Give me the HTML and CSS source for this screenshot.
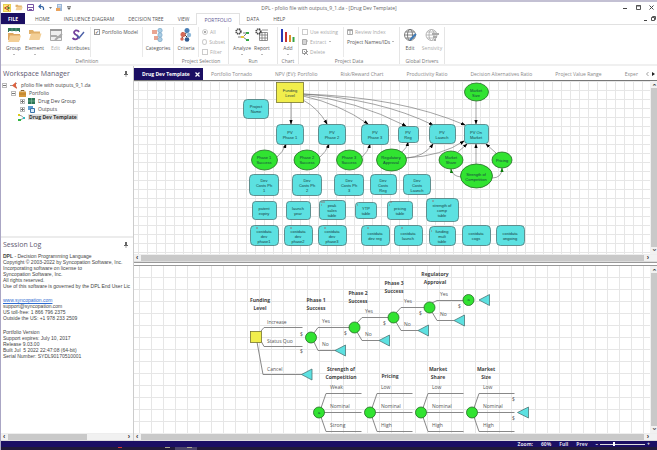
FILE: index.html
```html
<!DOCTYPE html>
<html lang="en">
<head>
<meta charset="utf-8">
<title>DPL - pfolio file with outputs_9_1.da</title>
<link rel="stylesheet" href="styles.css">
</head>
<body>
<svg class="defs" width="0" height="0" aria-hidden="true">
  <defs>
    <pattern id="grid-s" width="9" height="9" patternUnits="userSpaceOnUse"><path class="grid" d="M4.5 0V9M0 .5H9"/></pattern>
    <pattern id="grid-l" width="12" height="12" patternUnits="userSpaceOnUse"><path class="grid" d="M5.5 0V12M0 11.5H12"/></pattern>
    <marker id="arrow" viewBox="0 0 6 4" refX="5" refY="2" markerWidth="5" markerHeight="4" markerUnits="userSpaceOnUse" orient="auto"><path d="M0 0L6 2L0 4Z"/></marker>
    <marker id="arrow-g" viewBox="0 0 6 4" refX="5" refY="2" markerWidth="5" markerHeight="4" markerUnits="userSpaceOnUse" orient="auto"><path fill="#0a7a0a" d="M0 0L6 2L0 4Z"/></marker>
    <symbol id="folder" viewBox="0 0 14 12"><path fill="#e0b06a" d="M1 1H5L6 2.500H12V5H1Z"/><path fill="#f3cf96" d="M3 4.500H13.500L11.500 11H1Z"/></symbol>
    <symbol id="pin" viewBox="0 0 4 6"><path d="M1 0H3V3H4V4H0V3H1ZM1.700 4H2.300V6H1.700Z" fill="#666"/></symbol>
  </defs>
</svg>

<header class="titlebar">
  <div class="quick">
    <svg width="8" height="8"><rect x=".5" y=".5" width="7" height="7" fill="#ffe873" stroke="#e8cf50"/><path d="M1.500 4L6 1.500M1.500 4L6 6.500" stroke="#b43" /><circle cx="5.500" cy="4" r="1.200" fill="#487b31"/></svg>
    <svg width="8" height="7"><use href="#folder"/></svg>
    <svg width="7" height="7"><path d="M.5.5H6.500V6.500H.5Z" fill="#fff" stroke="#7854a4"/><path d="M1 3H6V4H1ZM2 5H5V7H2Z" fill="#7854a4"/></svg>
    <svg width="7" height="7"><path d="M1 2.500H4Q6 3 5.500 6M3 .5L1 2.500L3 4.500" fill="none" stroke="#3565a4" stroke-width="1.200"/></svg>
    <svg width="3" height="2"><path d="M0 0H3L1.500 2Z" fill="#777"/></svg>
    <svg width="7" height="7"><path d="M1 0H6V7H1Z" fill="#9bb6d6"/><path d="M0 4H4V7H0Z" fill="#e9a35d"/><path d="M2 1.500H5M2 3H5" stroke="#fff" stroke-width=".6"/></svg>
    <svg width="4" height="4"><path d="M0 0H4V.8H0ZM0 1.500H4L2 4Z" fill="#666"/></svg>
  </div>
  <h1>DPL - pfolio file with outputs_9_1.da - [Drug Dev Template]</h1>
  <div class="winctl">
    <button aria-label="Minimize"><svg width="5" height="5"><path d="M0 3.500H4" stroke="#444"/></svg></button>
    <button aria-label="Maximize"><svg width="5" height="5"><path d="M.5.5H4.500V4.500H.5ZM0 1H5" fill="none" stroke="#555"/></svg></button>
    <button aria-label="Close"><svg width="5" height="5"><path d="M.5.5L4.500 4.500M4.500.5L.5 4.500" stroke="#444"/></svg></button>
  </div>
</header>

<nav class="menu">
  <a class="file" href="#file">FILE</a>
  <a href="#home">HOME</a>
  <a href="#influence">INFLUENCE DIAGRAM</a>
  <a href="#tree">DECISION TREE</a>
  <a href="#view">VIEW</a>
  <a class="current" href="#portfolio">PORTFOLIO</a>
  <a href="#data">DATA</a>
  <a href="#help">HELP</a>
  <span class="docctl">
    <button aria-label="Minimize document"><svg width="4" height="5"><path d="M0 4.500H3" stroke="#444"/></svg></button>
    <button aria-label="Restore document"><svg width="5" height="5"><path d="M1.500 1.500V.5H4.500V3.500H3.500M.5 1.500H3.500V4.500H.5Z" fill="none" stroke="#555"/></svg></button>
  </span>
</nav>

<section class="ribbon">
  <div class="group">
    <div class="tools first">
      <button class="tool w-l drop"><svg width="14" height="14" viewBox="0 0 14 14"><path fill="#327a5c" d="M1 0H13V4H1Z"/><path fill="#fff" d="M2 3H12V7H2Z"/><path d="M5 0V4M9 0V4" stroke="#82b39c" stroke-width=".6"/><path fill="#dda65f" d="M1 5H6L7 6H13V12H1Z"/><path fill="#f3cf96" d="M3 7.500H14L12 14H1Z"/></svg>Group</button>
      <button class="tool w-l drop"><svg width="14" height="14" viewBox="0 0 14 14"><use href="#folder" y="1" width="14" height="12"/></svg>Element</button>
      <button class="tool w-l" disabled><svg width="14" height="14" viewBox="0 0 14 14"><path d="M1.500 1.500H12.500V12.500H1.500Z" fill="#eee" stroke="#aaa"/><path d="M1 2H13" stroke="#999" stroke-width="2"/><path d="M2 8H7L8 9H12M6 12L13 6" stroke="#aaa" stroke-width="2" fill="none"/></svg>Edit</button>
      <button class="tool w-xl"><svg width="14" height="14" viewBox="0 0 14 14"><path d="M8 4Q7 2 4.500 2.500Q1.500 4 4.500 6.500Q8 8 6.500 10.500Q4 12.500 1.500 10" fill="none" stroke="#74409b" stroke-width="1.800"/><path d="M6 7L8 10L13 4" fill="none" stroke="#4c61a8" stroke-width="1.400"/></svg>Attributes</button>
      <div class="stack pane-m"><label><input type="checkbox" checked>Portfolio Model</label></div>
      <button class="tool w-xxl line"><svg width="14" height="14" viewBox="0 0 14 14"><path d="M1 2H6V6H1ZM3 8H7V12H3Z" fill="#e9a592"/><g fill="#aacde3" stroke="#6ea0c4" stroke-width=".6"><circle cx="9" cy="2.500" r="2.200"/><circle cx="9" cy="7" r="2.200"/><circle cx="9" cy="11.500" r="2.200"/></g></svg>Categories</button>
    </div>
    <h2>Definition</h2>
  </div>
  <div class="group">
    <div class="tools">
      <button class="tool w-xl"><svg width="14" height="14" viewBox="0 0 14 14"><path d="M3 4L8 9M8 4L3 10" stroke="#333"/><circle cx="8" cy="2.500" r="2.500" fill="#4a7fb5"/><circle cx="4" cy="6.500" r="2.500" fill="#d66a58"/><circle cx="10" cy="7" r="2.200" fill="#8fb9da"/><circle cx="8" cy="11.500" r="2.300" fill="#315c91"/><circle cx="3" cy="11" r="1.700" fill="#d66a58"/></svg>Criteria</button>
      <div class="stack pane-xs line-l dim">
        <label><input type="radio" name="sel" checked disabled>All</label>
        <label><input type="radio" name="sel" disabled>Subset</label>
        <label><input type="checkbox" disabled>Filter</label>
      </div>
    </div>
    <h2>Project Selection</h2>
  </div>
  <div class="group">
    <div class="tools pad">
      <button class="tool w-l drop"><svg width="14" height="14" viewBox="0 0 14 14"><circle cx="3.500" cy="3.500" r="2.300" fill="none" stroke="#444" stroke-width="1.800" stroke-dasharray="1.200 .5"/><path d="M3 9H8L12 5M8 9L12 12M8 5H12" fill="none" stroke="#444" stroke-width=".7"/><path d="M11 4H14V6H11ZM11 11H14V13H11Z" fill="#35a845"/><path d="M6 8H9V10H6Z" fill="#e5c739"/></svg>Analyze</button>
      <button class="tool w-l drop"><svg width="14" height="14" viewBox="0 0 14 14"><path d="M4.500 4.500H12.500V12.500H4.500ZM4 7H13M4 10H13M7 4V13M10 4V13M7 2H13" fill="none" stroke="#777" stroke-width=".8"/><circle cx="3.500" cy="3.500" r="2.300" fill="none" stroke="#444" stroke-width="1.800" stroke-dasharray="1.200 .5"/></svg>Report</button>
    </div>
    <h2>Run</h2>
  </div>
  <div class="group">
    <div class="tools">
      <button class="tool w-l drop"><svg width="14" height="14" viewBox="0 0 14 14"><path d="M0 1H2V14H0Z" fill="#2938b5"/><path d="M4 4H6V14H4Z" fill="#c83232"/><path d="M8 7H10V14H8Z" fill="#dc8d2c"/><path d="M11.500 9H13.500V14H11.500Z" fill="#38a544"/></svg>Add</button>
    </div>
    <h2>Chart</h2>
  </div>
  <div class="group">
    <div class="tools">
      <div class="stack pane-s dim">
        <label><input type="checkbox" disabled>Use existing</label>
        <button disabled><svg width="6" height="6"><path d="M.5.5H4.500V5.500H.5ZM1 2H6M1 4H5" fill="none" stroke="#aaa"/></svg>Extract&nbsp; <i class="caret"></i></button>
        <button disabled><svg width="6" height="6"><path d="M.5.5H4.500V4.500H.5ZM2 2L6 6M6 2L2 6" fill="none" stroke="#999"/></svg>Delete</button>
      </div>
      <div class="stack pane-l line-l">
        <button disabled><svg width="6" height="6"><path d="M.5.5H5.500V5.500H.5ZM0 1.500H6M3 2V6" fill="none" stroke="#aaa"/></svg>Review Index</button>
        <button>Project Names/IDs <i class="caret"></i></button>
      </div>
    </div>
    <h2>Project Data</h2>
  </div>
  <div class="group">
    <div class="tools">
      <button class="tool w-l"><svg width="14" height="14" viewBox="0 0 14 14"><g fill="none" stroke="#666" stroke-width=".8"><circle cx="7" cy="7" r="5.500"/><ellipse cx="7" cy="7" rx="2.500" ry="5.500"/><path d="M1.500 7H12.500M2.500 4H11.500M2.500 10H11.500"/></g><path d="M7 12L13 6" stroke="#3d7ab8" stroke-width="1.800"/></svg>Edit</button>
      <button class="tool w-xl" disabled><svg width="14" height="14" viewBox="0 0 14 14"><g fill="none" stroke="#aaa" stroke-width=".8"><circle cx="6.500" cy="7" r="5.500"/><ellipse cx="6.500" cy="7" rx="2.500" ry="5.500"/><path d="M1 7H12M2 4H11M2 10H11"/></g><path d="M7 5H14V7H7ZM8 8H12V10H8ZM9 11H11V13H9Z" fill="#aaa"/></svg>Sensivity</button>
    </div>
    <h2>Global Drivers</h2>
  </div>
</section>

<main class="work">
  <aside class="side">
    <section class="manager">
      <header><h2>Workspace Manager</h2><svg width="4" height="6"><use href="#pin"/></svg></header>
      <ul class="tree">
        <li><span class="row"><i class="box"></i><svg width="8" height="7"><path d="M0 3.500H4L7 1M4 3.500L7 6" stroke="#999" fill="none"/><path d="M2 3.500L6 0V3.500L7 7L4 5Z" fill="#dc6240"/></svg>pfolio file with outputs_9_1.da</span>
          <ul>
            <li><span class="row"><i class="box"></i><svg width="7" height="7"><path d="M2 1.500V.5H5V1.500" fill="none" stroke="#8b642d"/><path d="M0 1.500H7V7H0Z" fill="#d79a3c"/><path d="M0 4H7" stroke="#9b681f" stroke-width=".6"/></svg>Portfolio</span>
              <ul>
                <li><span class="row"><i class="box plus"></i><svg width="7" height="6"><path d="M0 0H7V6H0Z" fill="#2c7656"/><path d="M0 3H7M3.500 0V6" stroke="#8fc2a9" stroke-width=".6"/></svg>Drug Dev Group</span></li>
                <li><span class="row"><i class="box plus"></i><svg width="7" height="7"><path d="M0 0H5V4H0Z" fill="#5f9fd4"/><path d="M2.500 2.500H6.500V6.500H2.500Z" fill="#dcecf9" stroke="#3872a9"/></svg>Outputs</span></li>
              </ul>
            </li>
            <li><span class="row leaf"><svg width="7" height="7"><path d="M1 1.500H3L6 4M1 5.500H3L6 4" stroke="#555" fill="none" stroke-width=".6"/><path d="M0 0H2V2H0Z" fill="#d9c91b"/><path d="M0 5H3V7H0Z" fill="#33b545"/><path d="M5 3H7V5H5Z" fill="#35b9c0"/></svg><b>Drug Dev Template</b></span></li>
          </ul>
        </li>
      </ul>
    </section>
    <section class="log">
      <header><h2>Session Log</h2><svg width="4" height="6"><use href="#pin"/></svg></header>
      <div class="logtext">
        <p><b>DPL</b> - Decision Programming Language<br>Copyright © 2003-2022 by Syncopation Software, Inc.<br>Incorporating software on license to<br>Syncopation Software, Inc.<br>All rights reserved.<br>Use of this software is governed by the DPL End User Lic</p>
        <p><a href="#site">www.syncopation.com</a><br>support@syncopation.com<br>US toll-free: 1 866 796 2375<br>Outside the US: +1 978 233 2509</p>
        <p>Portfolio Version<br>Support expires: July 10, 2017<br>Release 9.03.00<br>Built Jul&nbsp; 5 2022 22:47:08 (64-bit)<br>Serial Number: SYDL90170510001</p>
      </div>
      <div class="hbar"><span>‹</span><div class="track"><i class="thumb part"></i></div><span>›</span></div>
    </section>
  </aside>

  <section class="docs">
    <nav class="tabs">
      <a class="active" href="#t1">Drug Dev Template <svg width="5" height="5"><path d="M.5.5L4.500 4.500M4.500.5L.5 4.500" stroke="#fff" stroke-width="1.200"/></svg></a>
      <div class="others">
        <a href="#t2">Portfolio Tornado</a>
        <a href="#t3">NPV (EV): Portfolio</a>
        <a href="#t4">Risk/Reward Chart</a>
        <a href="#t5">Productivity Ratio</a>
        <a href="#t6">Decision Alternatives Ratio</a>
        <a href="#t7">Project Value Range</a>
        <a href="#t8">Exper</a>
      </div>
      <div class="arrows"><button aria-label="Previous tabs"><svg width="3" height="4"><path d="M2.500 0L.5 2L2.500 4" fill="none" stroke="#888" stroke-width=".8"/></svg></button><button aria-label="Next tabs"><svg width="3" height="4"><path d="M0 0L3 2L0 4Z" fill="#222"/></svg></button></div>
    </nav>

    <div class="view influence">
      <svg class="canvas" aria-label="Influence diagram">
        <rect width="100%" height="100%" fill="url(#grid-s)"/>
        <g transform="translate(-134 -81)">
          <g class="arc">
            <path d="M291 102V124"/><path d="M303 100Q318 108 327 124"/><path d="M303 96Q340 104 368 124"/><path d="M303 95Q355 100 406 126"/><path d="M303 94Q380 99 433 125"/><path d="M303 94Q400 97 465 125"/>
            <path d="M277 157Q283 152 286 144"/><path d="M320 157Q326 152 329 144"/><path d="M362 157Q368 152 370 144"/>
            <path d="M402 152Q407 148 408 142"/><path d="M406 158Q424 157 433 144"/><path d="M406 158Q442 156 464 141"/>
            <path d="M476 101V124"/><path d="M476 164V144"/><path d="M458 152L467 144"/><path d="M496 153L486 144"/>
            <path class="g" d="M461 177Q452 176 451 169"/><path class="g" d="M492 178Q502 178 502 168"/>
          </g>
          <g class="node">
            <rect class="dec" x="276.500" y="82.500" width="27" height="20"/>
            <rect x="243.500" y="99.500" width="25" height="19" rx="4"/>
            <rect x="276.500" y="124.500" width="27" height="20" rx="4"/><rect x="318.500" y="124.500" width="27" height="20" rx="4"/><rect x="361.500" y="124.500" width="27" height="20" rx="4"/>
            <rect x="398.500" y="126.500" width="20" height="16" rx="3"/><rect x="429.500" y="124.500" width="26" height="19" rx="4"/><rect x="464.500" y="124.500" width="24" height="19" rx="3"/>
            <rect x="249.500" y="174.500" width="29" height="21" rx="4"/><rect x="292.500" y="174.500" width="29" height="21" rx="4"/><rect x="334.500" y="174.500" width="29" height="21" rx="4"/><rect x="370.500" y="174.500" width="26" height="20" rx="4"/><rect x="403.500" y="174.500" width="27" height="20" rx="4"/>
            <rect x="252.500" y="201.500" width="24" height="18" rx="3"/><rect x="286.500" y="201.500" width="24" height="18" rx="3"/><rect x="319.500" y="200.500" width="26" height="19" rx="3"/><rect x="355.500" y="202.500" width="21" height="16" rx="3"/><rect x="387.500" y="201.500" width="25" height="18" rx="3"/><rect x="426.500" y="198.500" width="32" height="23" rx="4"/>
            <rect x="250.500" y="225.500" width="28" height="20" rx="4"/><rect x="284.500" y="225.500" width="28" height="20" rx="4"/><rect x="318.500" y="225.500" width="28" height="20" rx="4"/><rect x="361.500" y="225.500" width="28" height="20" rx="4"/><rect x="394.500" y="225.500" width="28" height="20" rx="4"/><rect x="429.500" y="226.500" width="26" height="19" rx="4"/><rect x="462.500" y="225.500" width="28" height="20" rx="4"/><rect x="496.500" y="225.500" width="28" height="20" rx="4"/>
            <ellipse cx="264.500" cy="160" rx="13" ry="10"/><ellipse cx="307" cy="160" rx="13" ry="10"/><ellipse cx="349.500" cy="160" rx="13" ry="10"/><ellipse cx="391.500" cy="160" rx="15" ry="11"/>
            <ellipse cx="476.500" cy="92" rx="12" ry="9"/><ellipse cx="451" cy="160" rx="12" ry="9"/><ellipse cx="502" cy="160" rx="10" ry="8"/><ellipse cx="476.500" cy="176" rx="16" ry="12"/>
          </g>
          <path class="tick" d="M256 228H258M290 228H292M324 228H326M367 228H369M401 228H403M431 231H432M321 202H325M321 205H322M357 205H358M390 202H392M389 205H390M432 201H434"/>
          <g class="name">
            <text y="92"><tspan x="290">Funding</tspan><tspan x="290" dy="5">Level</tspan></text>
            <text y="108"><tspan x="256">Project</tspan><tspan x="256" dy="5">Name</tspan></text>
            <text y="134"><tspan x="290">PV</tspan><tspan x="290" dy="5">Phase 1</tspan></text>
            <text y="134"><tspan x="332">PV</tspan><tspan x="332" dy="5">Phase 2</tspan></text>
            <text y="134"><tspan x="375">PV</tspan><tspan x="375" dy="5">Phase 3</tspan></text>
            <text y="134"><tspan x="408">PV</tspan><tspan x="408" dy="5">Reg</tspan></text>
            <text y="134"><tspan x="442">PV</tspan><tspan x="442" dy="5">Launch</tspan></text>
            <text y="134"><tspan x="476">PV On</tspan><tspan x="476" dy="5">Market</tspan></text>
            <text y="92"><tspan x="476">Market</tspan><tspan x="476" dy="5">Size</tspan></text>
            <text y="159"><tspan x="264">Phase 1</tspan><tspan x="264" dy="5">Success</tspan></text>
            <text y="159"><tspan x="307">Phase 2</tspan><tspan x="307" dy="5">Success</tspan></text>
            <text y="159"><tspan x="349">Phase 3</tspan><tspan x="349" dy="5">Success</tspan></text>
            <text y="159"><tspan x="391">Regulatory</tspan><tspan x="391" dy="5">Approval</tspan></text>
            <text y="159"><tspan x="451">Market</tspan><tspan x="451" dy="5">Share</tspan></text>
            <text x="502" y="162">Pricing</text>
            <text y="176"><tspan x="476">Strength of</tspan><tspan x="476" dy="5">Competition</tspan></text>
            <text y="182"><tspan x="264">Dev</tspan><tspan x="264" dy="5">Costs Ph</tspan><tspan x="264" dy="5">1</tspan></text>
            <text y="182"><tspan x="307">Dev</tspan><tspan x="307" dy="5">Costs Ph</tspan><tspan x="307" dy="5">2</tspan></text>
            <text y="182"><tspan x="349">Dev</tspan><tspan x="349" dy="5">Costs Ph</tspan><tspan x="349" dy="5">3</tspan></text>
            <text y="182"><tspan x="383">Dev</tspan><tspan x="383" dy="5">Costs</tspan><tspan x="383" dy="5">Reg</tspan></text>
            <text y="182"><tspan x="417">Dev</tspan><tspan x="417" dy="5">Costs</tspan><tspan x="417" dy="5">Launch</tspan></text>
            <text y="210"><tspan x="264">patent</tspan><tspan x="264" dy="5">expiry</tspan></text>
            <text y="210"><tspan x="298">launch</tspan><tspan x="298" dy="5">year</tspan></text>
            <text y="207"><tspan x="332">peak</tspan><tspan x="332" dy="5">sales</tspan><tspan x="332" dy="5">table</tspan></text>
            <text y="210"><tspan x="366">YTP</tspan><tspan x="366" dy="5">table</tspan></text>
            <text y="210"><tspan x="400">pricing</tspan><tspan x="400" dy="5">table</tspan></text>
            <text y="207"><tspan x="442">strength of</tspan><tspan x="442" dy="5">comp</tspan><tspan x="442" dy="5">table</tspan></text>
            <text y="233"><tspan x="264">costdata</tspan><tspan x="264" dy="5">dev</tspan><tspan x="264" dy="5">phase1</tspan></text>
            <text y="233"><tspan x="298">costdata</tspan><tspan x="298" dy="5">dev</tspan><tspan x="298" dy="5">phase2</tspan></text>
            <text y="233"><tspan x="332">costdata</tspan><tspan x="332" dy="5">dev</tspan><tspan x="332" dy="5">phase3</tspan></text>
            <text y="235"><tspan x="375">costdata</tspan><tspan x="375" dy="5">dev reg</tspan></text>
            <text y="235"><tspan x="408">costdata</tspan><tspan x="408" dy="5">launch</tspan></text>
            <text y="233"><tspan x="442">funding</tspan><tspan x="442" dy="5">mult</tspan><tspan x="442" dy="5">table</tspan></text>
            <text y="235"><tspan x="476">costdata</tspan><tspan x="476" dy="5">cogs</tspan></text>
            <text y="235"><tspan x="510">costdata</tspan><tspan x="510" dy="5">ongoing</tspan></text>
          </g>
        </g>
      </svg>
      <div class="vbar"><span>‹</span><i class="thumb full"></i><span>›</span></div>
      <div class="hbar"><span>‹</span><div class="track"><i class="thumb full"></i></div><span>›</span></div>
    </div>

    <div class="view decision">
      <svg class="canvas" aria-label="Decision tree">
        <rect width="100%" height="100%" fill="url(#grid-l)"/>
        <g transform="translate(-134 -266)">
          <path class="branch" d="M261 331L264 327.500H302.500M261 341L264 346.500H302.500M257 342L263 374.500H302
            M314 333L318 327.500H354M314 342L318 350.500H336
            M357 323L362 317.500H393M357 332L362 340.500H379
            M396 313L401 307.500H429M396 322L401 330.500H418
            M432 303L437 300.500H468M432 312L437 320.500H454"/>
          <path class="branch" d="M321 408L326 393.500H361.500M319 412.500H361.500M321 417L326 431.500H361.500"/>
          <path class="branch" d="M372 408L377 393.500H412.500M370 412.500H412.500M372 417L377 431.500H412.500"/>
          <path class="branch" d="M423 408L428 393.500H463.500M421 412.500H463.500M423 417L428 431.500H463.500"/>
          <path class="branch" d="M474 408L479 393.500H514.500M472 412.500H514.500M474 417L479 431.500H514.500"/>
          <g class="node">
            <rect class="dec" x="250.500" y="331.500" width="11" height="11"/>
            <circle cx="311" cy="337.500" r="5.500"/><circle cx="354.500" cy="327.500" r="5.500"/><circle cx="393.500" cy="317.500" r="5.500"/><circle cx="429.500" cy="307.500" r="5.500"/><circle cx="468.500" cy="300" r="5.500"/>
            <circle cx="319" cy="412.500" r="5.500"/><circle cx="370" cy="412.500" r="5.500"/><circle cx="421" cy="412.500" r="5.500"/><circle cx="472" cy="412.500" r="5.500"/>
            <path d="M335 350.500L345.500 345V356ZM379 340.500L389.500 335V346ZM418 330.500L428.500 325V336ZM454 320.500L464.500 315V326ZM479 300L489.500 294.500V305.500ZM301.500 374.500L312 369V380ZM517.500 412.500L528.500 407V418Z"/>
          </g>
          <g class="name"><text x="468.500" y="301">a</text><text x="319" y="414">a</text></g>
          <g class="outcome">
            <text x="267" y="324">Increase</text><text x="267" y="343">Status Quo</text><text x="267" y="371">Cancel</text>
            <text x="322" y="323">Yes</text><text x="322" y="346">No</text>
            <text x="365" y="313">Yes</text><text x="365" y="336">No</text>
            <text x="404" y="303">Yes</text><text x="404" y="326">No</text>
            <text x="440" y="296">Yes</text><text x="440" y="316">No</text>
            <text x="300" y="336">$</text><text x="300" y="353">$</text><text x="344" y="335">$</text><text x="383" y="325">$</text><text x="419" y="315">$</text><text x="458" y="308">$</text>
            <text x="330" y="389">Weak</text><text x="330" y="408">Nominal</text><text x="330" y="427">Strong</text>
            <text x="381" y="389">Low</text><text x="381" y="408">Nominal</text><text x="381" y="427">High</text>
            <text x="432" y="389">Low</text><text x="432" y="408">Nominal</text><text x="432" y="427">High</text>
            <text x="483" y="389">Low</text><text x="483" y="408">Nominal</text><text x="483" y="427">High</text>
            <text x="512" y="401">$</text><text x="512" y="420">$</text>
          </g>
          <g class="heading">
            <text y="302"><tspan x="260">Funding</tspan><tspan x="260" dy="8">Level</tspan></text>
            <text y="302"><tspan x="316">Phase 1</tspan><tspan x="316" dy="8">Success</tspan></text>
            <text y="295"><tspan x="358">Phase 2</tspan><tspan x="358" dy="8">Success</tspan></text>
            <text y="285"><tspan x="394">Phase 3</tspan><tspan x="394" dy="8">Success</tspan></text>
            <text y="276"><tspan x="435">Regulatory</tspan><tspan x="435" dy="8">Approval</tspan></text>
            <text y="371"><tspan x="341">Strength of</tspan><tspan x="341" dy="8">Competition</tspan></text>
            <text x="390" y="378">Pricing</text>
            <text y="371"><tspan x="438">Market</tspan><tspan x="438" dy="8">Share</tspan></text>
            <text y="371"><tspan x="486">Market</tspan><tspan x="486" dy="8">Size</tspan></text>
          </g>
        </g>
      </svg>
      <div class="vbar"><span>‹</span><i class="thumb full"></i><span>›</span></div>
      <div class="hbar"><span>‹</span><div class="track"><i class="thumb full"></i></div><span>›</span></div>
    </div>
  </section>
</main>

<footer class="status">
  <label for="zoom">Zoom:</label><span>60%</span><a href="#full">Full</a><a href="#prev">Prev</a>
  <span class="zoomer"><b>–</b><input id="zoom" type="range" min="0" max="100" value="30"><b>+</b></span>
</footer>
<div class="taskbar"><i class="red"></i><i class="app"></i><i class="app lit"></i></div>
</body>
</html>
```
FILE: styles.css
```css
* { box-sizing: border-box; }
body {
  margin: 0;
  height: 100vh;
  display: flex;
  flex-direction: column;
  overflow: hidden;
  background: #fff;
  border-top: 2px solid #c3c0d3;
  border-left: 1px solid #aaa6c4;
  font: 5px/6px "Open Sans", "Noto Sans", sans-serif;
  color: #555;
}
h1, h2, p, ul { margin: 0; padding: 0; font-weight: normal; }
ul { list-style: none; }
a { color: inherit; text-decoration: none; }
svg { flex: none; }
button {
  display: flex;
  align-items: center;
  border: 0;
  padding: 0;
  background: none;
  font: inherit;
  color: inherit;
}
button:disabled { color: #aaa; }
.defs { position: absolute; }
.grid { fill: none; stroke: #e6e6e6; }

.titlebar {
  display: grid;
  grid-template-columns: 1fr auto 1fr;
  align-items: center;
  flex: none;
  height: 11px;
}
.titlebar h1 { font-size: 5px; color: #666; }
.quick { display: flex; align-items: center; gap: 4px; padding-left: 2px; }
.winctl { display: flex; justify-content: flex-end; gap: 8px; padding-right: 3px; }

.menu {
  display: flex;
  align-items: stretch;
  height: 12px;
  border-bottom: 1px solid #e1e1e1;
  flex: none;
}
.menu a { display: flex; align-items: center; padding: 0 7px; }
.menu .file {
  width: 24px;
  justify-content: center;
  margin-right: 3px;
  padding: 0;
  background: #1b0f63;
  color: #fff;
  font-weight: bold;
}
.menu .current {
  height: 12px;
  background: #fff;
  border: 1px solid #e1e1e1;
  border-bottom: 0;
  color: #5d5694;
}
.docctl { display: flex; gap: 3px; margin-left: auto; padding-right: 1px; }

.ribbon {
  display: flex;
  flex: none;
  height: 41px;
  padding-top: 2px;
  border-bottom: 2px solid #f0f0f0;
}
.group {
  display: flex;
  flex-direction: column;
  justify-content: space-between;
  border-right: 1px solid #e5e5e5;
}
.group h2 { font-size: 5px; text-align: center; color: #777; }
.tools { display: flex; height: 30px; }
.tools.first { padding-left: 2px; }
.tools.pad { padding: 0 5px 0 3px; }
.tool {
  flex-direction: column;
  gap: 3px;
  padding-top: 1px;
}
.tool.drop::after {
  content: "";
  border: 1px solid transparent;
  border-top-color: #777;
}
.w-l { width: 20px; }
.w-xl { width: 24px; }
.w-xxl { width: 31px; }
.line, .line-l { border-left: 1px solid #e9e9e9; }
.first .w-l { width: 21px; }
.stack {
  display: flex;
  flex-direction: column;
  gap: 4px;
  padding: 2px 3px 0;
  white-space: nowrap;
}
.stack.dim { color: #aaa; }
.stack label, .stack button { display: flex; align-items: center; gap: 2px; height: 6px; }
.pane-xs { width: 30px; }
.pane-m { width: 52px; border-left: 1px solid #e9e9e9; }
.pane-s { width: 44px; }
.pane-l { width: 56px; }
.caret { border: 1px solid transparent; border-top-color: #777; }
input[type="checkbox"], input[type="radio"] {
  appearance: none;
  display: grid;
  place-content: center;
  width: 6px;
  height: 6px;
  margin: 0;
  border: 1px solid #999;
  background: #fff;
}
input[type="radio"] { border-radius: 50%; }
input:disabled { border-color: #ccc; }
input[type="checkbox"]:checked::after { content: "✓"; font: 5px/4px "DejaVu Sans", sans-serif; color: #333; }
input[type="radio"]:checked::after { content: ""; width: 2px; height: 2px; background: #aaa; }

.work { display: flex; flex: 1; min-height: 0; }
.side {
  display: flex;
  flex-direction: column;
  width: 133px;
  flex: none;
  border-right: 1px solid #ccc;
}
.side header {
  display: flex;
  align-items: center;
  justify-content: space-between;
  height: 15px;
  padding: 0 5px 0 2px;
}
.side h2 { font-size: 7px; line-height: 10px; color: #5c5870; }
.manager { flex: 10; min-height: 0; }
.log { flex: 12; min-height: 0; display: flex; flex-direction: column; border-top: 2px solid #ececec; }

.tree { padding: 0 1px; color: #444; }
.tree ul { padding-left: 9px; }
.tree b { background: #e0e0e0; color: #333; padding: 0 1px; }
.row { display: flex; align-items: center; gap: 3px; height: 8px; }
.row.leaf { padding-left: 7px; }
.box {
  width: 5px;
  height: 5px;
  border: 1px solid #bbb;
  background: linear-gradient(#777, #777) center / 3px 1px no-repeat;
}
.box.plus { background: linear-gradient(#777, #777) center / 3px 1px no-repeat, linear-gradient(#777, #777) center / 1px 3px no-repeat; }

.logtext {
  flex: 1;
  display: flex;
  flex-direction: column;
  gap: 8px;
  padding: 0 2px;
  overflow: hidden;
  white-space: nowrap;
  font-family: "Liberation Sans", sans-serif;
  color: #444;
}
.logtext a { color: #2c6bd0; text-decoration: underline; }

.hbar, .vbar {
  display: flex;
  align-items: center;
  background: #f1f1f1;
  color: #333;
  font: bold 7px/6px "Liberation Sans", sans-serif;
}
.hbar { height: 8px; gap: 3px; padding: 0 3px 0 2px; border-top: 1px solid #eee; border-bottom: 1px solid #ddd; }
.hbar .track { flex: 1; align-self: stretch; display: flex; }
.thumb { background: #c9c9c9; }
.thumb.full { flex: 1; }
.thumb.part { width: 68%; }
.vbar { flex-direction: column; padding: 1px 0; }
.vbar .thumb { width: 6px; }
.vbar span { width: 6px; height: 6px; text-align: center; transform: rotate(90deg); }
.view .hbar { grid-column: 1 / 3; padding-right: 8px; }

.docs { flex: 1; min-width: 0; display: flex; flex-direction: column; }
.tabs { display: flex; flex: none; height: 15px; padding-top: 2px; border-bottom: 1px solid #777; color: #888; }
.tabs a { display: flex; align-items: center; white-space: nowrap; }
.tabs .active {
  justify-content: space-between;
  width: 69px;
  padding: 0 3px 0 8px;
  background: #1b0f63;
  color: #fff;
  font-weight: bold;
}
.others { display: flex; flex: 1; gap: 23px; min-width: 0; padding-left: 8px; overflow: hidden; }
.arrows { display: flex; gap: 3px; padding: 0 2px 0 3px; }

.view {
  display: grid;
  grid-template: minmax(0, 1fr) 8px / minmax(0, 1fr) 7px;
  min-height: 0;
}
.influence { flex: 182 0 0; border-bottom: 1px solid #999; }
.decision { flex: 176 0 0; margin-top: 2px; border-top: 1px solid #999; }
.canvas { width: 100%; height: 100%; display: block; overflow: hidden; }

.arc path { fill: none; stroke: #666; stroke-width: .6; marker-end: url(#arrow); }
.arc path.g { marker-end: url(#arrow-g); }
.node { stroke: #4c7777; stroke-width: .8; }
.node rect, .node path { fill: #5ce1e1; }
.node .dec { fill: #f1ee4c; stroke: #77752f; }
.node ellipse, .node circle { fill: #31e331; stroke: #246b24; }
.tick { stroke: #a05050; stroke-width: .7; }
.name { font: 4px "Liberation Sans", sans-serif; fill: #174040; text-anchor: middle; }
.branch { fill: none; stroke: #888; }
.outcome { fill: #555; }
.heading { font-weight: bold; fill: #444; text-anchor: middle; }

.status {
  display: flex;
  flex: none;
  align-items: flex-start;
  justify-content: flex-end;
  gap: 8px;
  height: 6px;
  padding: 0 7px 0 0;
  overflow: hidden;
  background: #1b0f63;
  color: #dddbe8;
  font-weight: bold;
}
.zoomer { display: flex; gap: 2px; }
.zoomer input {
  appearance: none;
  width: 45px;
  height: 6px;
  margin: 0;
  background: linear-gradient(#ddd, #ddd) center / 100% 1px no-repeat;
}
.zoomer input::-webkit-slider-thumb { appearance: none; width: 2px; height: 4px; background: #fff; }
.taskbar { display: flex; flex: none; height: 3px; padding-left: 117px; background: #211a3a; }
.taskbar i { width: 22px; }
.taskbar .red { width: 35px; background: linear-gradient(#c33, #c33) 0 0 / 4px 1px no-repeat; }
.taskbar .app { background: linear-gradient(#aaa78c, #aaa78c) 12px 0 / 5px 1px no-repeat; }
.taskbar .lit { background-color: #4a4468; }
```
